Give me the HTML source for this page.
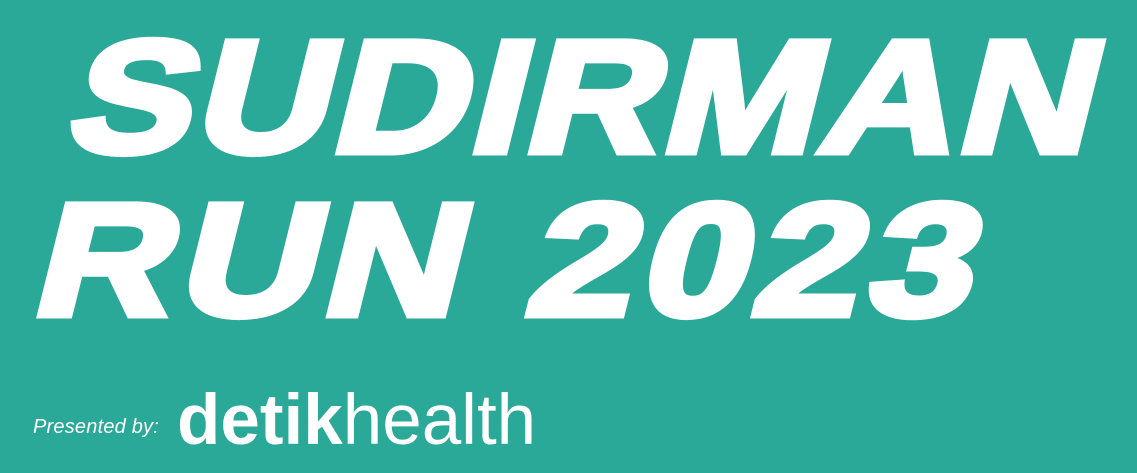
<!DOCTYPE html>
<html><head><meta charset="utf-8"><style>
html,body{margin:0;padding:0}
body{width:1137px;height:473px;background:#2aa898;position:relative;overflow:hidden;font-family:"Liberation Sans",sans-serif;color:#fff}
.t{position:absolute;font-weight:700;font-size:160px;line-height:1;white-space:nowrap;-webkit-text-stroke:7px #fff;transform-origin:0 0;letter-spacing:3px}
#l1{left:96px;top:17px;transform:skewX(-14deg) scaleX(1.16)}
#l2{left:62px;top:180px;transform:skewX(-14deg) scaleX(1.19);letter-spacing:6px}
#p{position:absolute;left:33px;top:416px;font-size:20px;font-style:italic;letter-spacing:0.2px}
#d{position:absolute;left:177px;top:385px;font-size:71px;line-height:1;letter-spacing:0px;white-space:nowrap}
#d b{font-weight:700}
#d span{font-weight:400}
</style></head><body>
<div class="t" id="l1">SUDIRMAN</div>
<div class="t" id="l2">RUN 2023</div>
<div id="p">Presented by:</div>
<div id="d"><b>detik</b><span>health</span></div>
</body></html>
